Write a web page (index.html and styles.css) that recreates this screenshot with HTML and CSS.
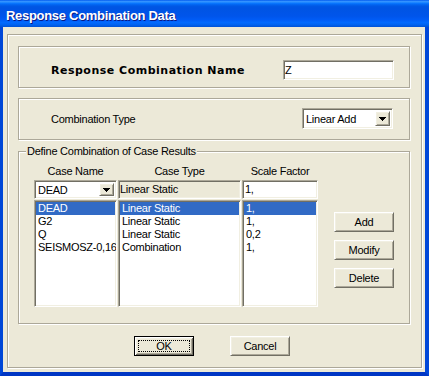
FILE: index.html
```html
<!DOCTYPE html>
<html lang="en">
<head>
	<meta charset="UTF-8">
	<title>Response Combination Data</title>
	<link rel="stylesheet" href="styles.css">
</head>
<body>
	<div class="window">
		<div class="titlebar">Response Combination Data</div>
		<div class="client">
			<div class="frame">
				<div class="group name-group">
					<span class="label-bold">Response Combination Name</span>
					<div class="field name-field">Z</div>
				</div>
				<div class="group type-group">
					<span class="label">Combination Type</span>
					<div class="combo type-combo">
						<span class="combo-text">Linear Add</span>
						<span class="drop"><svg width="7" height="4" shape-rendering="crispEdges"><path d="M0 0h7v1H0zM1 1h5v1H1zM2 2h3v1H2zM3 3h1v1H3z"/></svg></span>
					</div>
				</div>
				<div class="group cases-group">
					<span class="legend">Define Combination of Case Results</span>
					<div class="cases">
						<div class="case-grid">
							<div class="head">Case Name</div>
							<div class="head">Case Type</div>
							<div class="head">Scale Factor</div>

							<div class="combo case-combo">
								<span class="combo-text">DEAD</span>
								<span class="drop"><svg width="7" height="4" shape-rendering="crispEdges"><path d="M0 0h7v1H0zM1 1h5v1H1zM2 2h3v1H2zM3 3h1v1H3z"/></svg></span>
							</div>
							<div class="field readonly">Linear Static</div>
							<div class="field scale-field">1,</div>

							<ul class="list">
								<li class="sel">DEAD</li>
								<li>G2</li>
								<li>Q</li>
								<li>SEISMOSZ-0,16</li>
							</ul>
							<ul class="list">
								<li class="sel">Linear Static</li>
								<li>Linear Static</li>
								<li>Linear Static</li>
								<li>Combination</li>
							</ul>
							<ul class="list">
								<li class="sel">1,</li>
								<li>1,</li>
								<li>0,2</li>
								<li>1,</li>
							</ul>
						</div>
						<div class="side-buttons">
							<button class="btn">Add</button>
							<button class="btn">Modify</button>
							<button class="btn">Delete</button>
						</div>
					</div>
				</div>
				<div class="actions">
					<button class="btn default">OK</button>
					<button class="btn">Cancel</button>
				</div>
			</div>
		</div>
	</div>
</body>
</html>
```

FILE: styles.css
```css
*{
	margin: 0;
	padding: 0;
	box-sizing: border-box;
}
html,body{
	height: 100%;
}
body{
	width: 429px;
	height: 376px;
	overflow: hidden;
	background: #ECE9D8;
	color: #000;
	font-family: "Liberation Sans", Arial, sans-serif;
	font-size: 11px;
	letter-spacing: -0.25px;
}
ul{list-style: none;}

.window{
	height: 376px;
	display: flex;
	flex-direction: column;
}
.titlebar{
	flex: none;
	height: 27px;
	padding: 8px 0 0 6px;
	color: #fff;
	font-size: 13px;
	font-weight: bold;
	line-height: 15px;
	letter-spacing: -0.3px;
	text-shadow: 1px 1px 0 #0a1883;
	background: linear-gradient(to bottom, #0058ee 0%, #3593ff 5%, #288eff 8%, #127dff 11%, #036ffc 14%, #0262ee 18%, #0057e5 24%, #0054e3 30%, #0055eb 60%, #005bf5 72%, #026afe 84%, #0062ef 92%, #0052d6 100%);
}
.client{
	flex: 1;
	display: flex;
	border: solid #0047d8;
	border-width: 0 4px 4px 3px;
	border-bottom-color: #0036c4;
	padding: 7px 3px 4px 4px;
}
.frame{
	flex: 1;
	display: flex;
	flex-direction: column;
	border: 1px solid #ACA899;
	box-shadow: inset 1px 1px #fff, 1px 1px #fff;
	padding: 11px 11px 11px 10px;
}

.group{
	position: relative;
	border: 1px solid #ACA899;
	box-shadow: inset 1px 1px #fff, 1px 1px #fff;
}
.name-group{
	height: 42px;
	display: flex;
	align-items: flex-start;
	padding: 13px 15px 0 32px;
}
.type-group{
	height: 42px;
	margin-top: 10px;
	display: flex;
	align-items: flex-start;
	padding: 9px 16px 0 32px;
}
.label-bold{
	margin-top: 1px;
	font-family: "DejaVu Sans", sans-serif;
	font-weight: bold;
	letter-spacing: 0.5px;
	line-height: 20px;
}
.label{
	margin-top: 1px;
	line-height: 21px;
}

/* sunken edit / combo */
.field, .combo, .list{
	border: 1px solid;
	border-color: #ACA899 #fff #fff #ACA899;
	box-shadow: inset 1px 1px #716F64, inset -1px -1px #F1EFE2;
	background: #fff;
}
.field{
	padding: 1px 2px 0;
	line-height: 16px;
	white-space: nowrap;
	overflow: hidden;
}
.name-field{
	margin-left: auto;
	width: 111px;
	height: 20px;
	padding-left: 1px;
}
.readonly{
	background: #ECE9D8;
	padding-left: 1px;
}
.combo{
	display: flex;
	align-items: stretch;
	padding: 2px;
}
.combo-text{
	flex: 1;
	padding-left: 1px;
	line-height: 15px;
	white-space: nowrap;
}
.type-combo{
	margin-left: auto;
	width: 91px;
	height: 21px;
}
.type-combo .combo-text{
	line-height: 16px;
}
.drop{
	width: 15px;
	display: flex;
	align-items: center;
	justify-content: center;
	background: #ECE9D8;
	border: 1px solid;
	border-color: #fff #716F64 #716F64 #fff;
	box-shadow: inset 1px 1px #F1EFE2, inset -1px -1px #ACA899;
}

/* case results */
.cases-group{
	margin-top: 11px;
	padding: 13px 15px 16px 15px;
}
.legend{
	position: absolute;
	top: -7px;
	left: 7px;
	padding: 0 1px;
	background: #ECE9D8;
	line-height: 13px;
}
.cases{
	display: flex;
	align-items: flex-start;
}
.case-grid{
	display: grid;
	grid-template-columns: 83px 123px 76px;
	grid-template-rows: 15px 20px 107px;
	column-gap: 1px;
}
.head{
	text-align: center;
	line-height: 13px;
}
.case-combo, .case-grid .field{
	height: 19px;
}
.case-grid .field{
	line-height: 15px;
}
.list{
	padding: 1px;
	overflow: hidden;
}
.list li{
	padding-left: 2px;
	line-height: 13px;
	white-space: nowrap;
}
.list li.sel{
	background: #316AC5;
	color: #fff;
}

.side-buttons{
	display: flex;
	flex-direction: column;
	gap: 8px;
	margin: 47px 0 0 16px;
}

.btn{
	position: relative;
	width: 60px;
	height: 20px;
	font: inherit;
	letter-spacing: inherit;
	color: #000;
	background: #ECE9D8;
	border: 1px solid;
	border-color: #fff #716F64 #716F64 #fff;
	box-shadow: inset 1px 1px #F1EFE2, inset -1px -1px #ACA899;
}
.btn.default{
	border-color: #000;
	box-shadow: inset 1px 1px #fff, inset -1px -1px #716F64, inset 2px 2px #F1EFE2, inset -2px -2px #ACA899;
}
.btn.default::after{
	content: "";
	position: absolute;
	top: 3px;
	left: 3px;
	right: 3px;
	bottom: 3px;
	border: 1px dotted #000;
}

.actions{
	display: flex;
	justify-content: center;
	gap: 36px;
	margin-top: 12px;
	padding-right: 4px;
}
```
